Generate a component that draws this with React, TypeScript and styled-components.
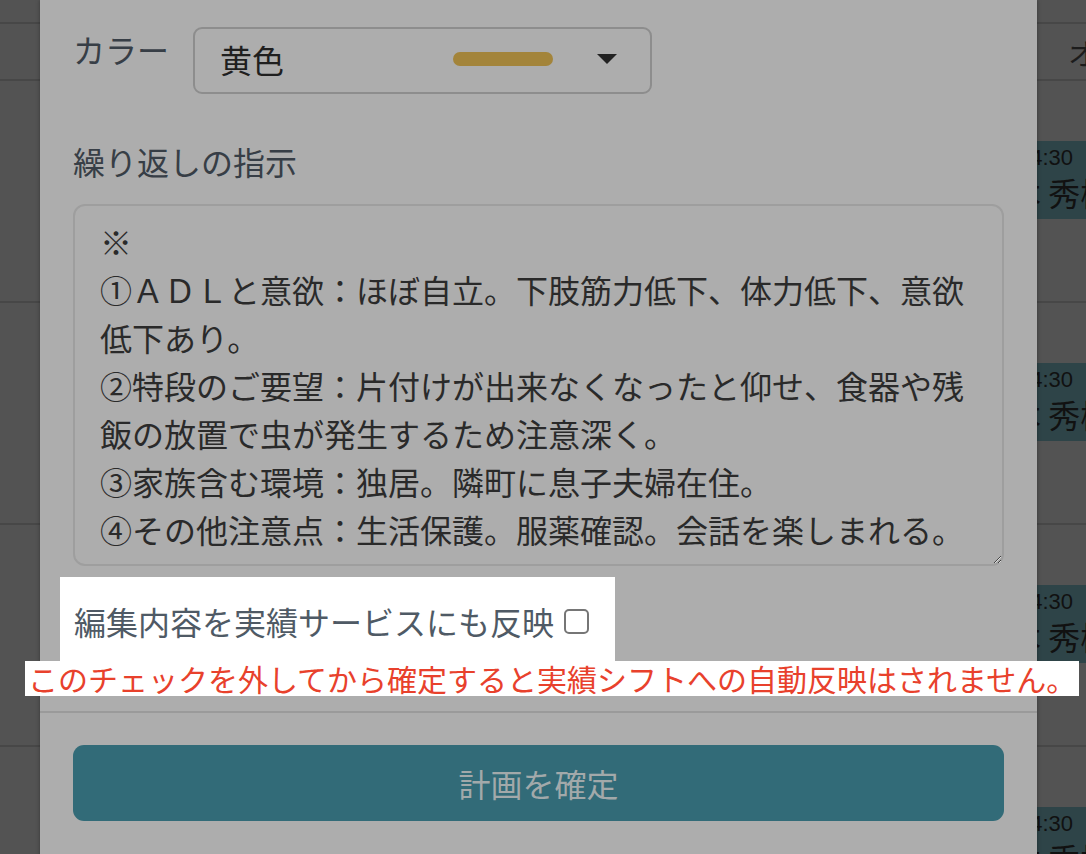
import styled, { createGlobalStyle } from 'styled-components';

const GlobalStyle = createGlobalStyle`
  html, body {
    margin: 0;
    padding: 0;
  }
  body {
    background: #535353;
    font-family: 'Noto Sans CJK JP', 'Noto Sans', sans-serif;
    overflow: hidden;
  }
`;

const Screen = styled.div`
  position: relative;
  width: 1086px;
  height: 854px;
  overflow: hidden;
  background: #535353;
`;

/* schedule table behind the modal */
const Schedule = styled.div`
  display: flex;
  flex-direction: column;
`;

const TopBar = styled.div`
  height: 22px;
  border-bottom: 2px solid #474747;
`;

const HeaderRow = styled.div`
  display: grid;
  grid-template-columns: 1068px 1fr;
  align-items: center;
  height: 55px;
  border-bottom: 2px solid #474747;
`;

const HeaderCell = styled.div`
  font-size: 30px;
  color: #1c1c1c;
  white-space: nowrap;
`;

const BodyRow = styled.div`
  display: grid;
  grid-template-columns: 977px 1fr;
  height: 220px;
  border-bottom: 2px solid #474747;
`;

const ShiftBlock = styled.div`
  margin-top: 60px;
  height: 78px;
  box-sizing: border-box;
  padding-top: 3px;
  background: #2e4448;
  color: #111;
  white-space: nowrap;
  overflow: hidden;
`;

const ShiftTime = styled.div`
  padding-left: 41px;
  font-family: 'Liberation Sans', Arial, sans-serif;
  font-size: 22px;
  line-height: 28px;
`;

const ShiftName = styled.div`
  font-size: 32px;
  line-height: 40px;
`;

/* modal */
const Modal = styled.div`
  position: absolute;
  top: 0;
  left: 40px;
  width: 997px;
  height: 900px;
  background: #adadad;
  box-shadow: 0 0 4px rgba(0, 0, 0, 0.35);
`;

const ModalBody = styled.div`
  display: flex;
  flex-direction: column;
  padding: 27px 33px 15px;
`;

const FieldRow = styled.div`
  display: flex;
  align-items: flex-start;
`;

const FieldLabel = styled.div<{ $width?: number; $top?: number }>`
  width: ${(p) => (p.$width ? `${p.$width}px` : 'auto')};
  margin-top: ${(p) => p.$top ?? 0}px;
  font-size: 32px;
  line-height: 48px;
  color: #373e46;
  white-space: nowrap;
`;

const Select = styled.div`
  display: flex;
  align-items: center;
  width: 459px;
  height: 67px;
  box-sizing: border-box;
  padding: 0 33px 4px 25px;
  border: 2px solid #8d8d8d;
  border-radius: 9px;
`;

const SelectValue = styled.span`
  flex: 1;
  font-size: 32px;
  color: #1f1f1f;
`;

const Swatch = styled.span<{ $color: string }>`
  width: 100px;
  height: 14px;
  margin-right: 44px;
  border-radius: 7px;
  background: ${(p) => p.$color};
`;

const TextArea = styled.textarea`
  display: block;
  width: 100%;
  height: 362px;
  margin-top: 19px;
  box-sizing: border-box;
  padding: 11px 25px;
  border: 2px solid #9e9e9e;
  border-radius: 12px;
  background: transparent;
  color: #2a2a2a;
  font-family: inherit;
  font-size: 32px;
  line-height: 48px;
  resize: vertical;
  overflow: hidden;
  outline: none;
`;

const CheckSpot = styled.label`
  align-self: flex-start;
  display: inline-flex;
  align-items: center;
  gap: 10px;
  margin: 11px 0 0 -13px;
  padding: 20px 26px 16px 14px;
  background: #fff;
  font-size: 32px;
  line-height: 48px;
  color: #4f5a65;
`;

const CheckBox = styled.input`
  appearance: none;
  width: 25px;
  height: 25px;
  margin: 0;
  box-sizing: border-box;
  border: 2px solid #767676;
  border-radius: 5px;
  background: #fff;
`;

const Warning = styled.div`
  align-self: flex-start;
  margin-left: -48px;
  padding: 0 3px;
  background: #fff;
  color: #e8412c;
  font-size: 30px;
  line-height: 35px;
  white-space: nowrap;
`;

const ModalFooter = styled.div`
  padding: 32px 33px;
  border-top: 2px solid #9a9a9a;
`;

const SubmitButton = styled.button`
  width: 100%;
  height: 76px;
  border: none;
  border-radius: 11px;
  background: #326b78;
  color: #a2a9aa;
  font-family: inherit;
  font-size: 32px;
`;

const instructions = [
  '※',
  '①ＡＤＬと意欲：ほぼ自立。下肢筋力低下、体力低下、意欲低下あり。',
  '②特段のご要望：片付けが出来なくなったと仰せ、食器や残飯の放置で虫が発生するため注意深く。',
  '③家族含む環境：独居。隣町に息子夫婦在住。',
  '④その他注意点：生活保護。服薬確認。会話を楽しまれる。',
].join('\n');

const rows = [0, 1, 2, 3];

export default function App() {
  return (
    <Screen>
      <GlobalStyle />
      <Schedule>
        <TopBar />
        <HeaderRow>
          <div />
          <HeaderCell>オペ</HeaderCell>
        </HeaderRow>
        {rows.map((r) => (
          <BodyRow key={r}>
            <div />
            <ShiftBlock>
              <ShiftTime>14:30</ShiftTime>
              <ShiftName>杉本 秀樹</ShiftName>
            </ShiftBlock>
          </BodyRow>
        ))}
      </Schedule>

      <Modal>
        <ModalBody>
          <FieldRow>
            <FieldLabel $width={120} $top={-2}>
              カラー
            </FieldLabel>
            <Select>
              <SelectValue>黄色</SelectValue>
              <Swatch $color="#a3843a" />
              <svg width="20" height="10" viewBox="0 0 20 10">
                <polygon points="0,0 20,0 10,10" fill="#222" />
              </svg>
            </Select>
          </FieldRow>

          <FieldLabel $top={43}>繰り返しの指示</FieldLabel>
          <TextArea defaultValue={instructions} spellCheck={false} />

          <CheckSpot>
            編集内容を実績サービスにも反映
            <CheckBox type="checkbox" />
          </CheckSpot>
          <Warning>このチェックを外してから確定すると実績シフトへの自動反映はされません。</Warning>
        </ModalBody>
        <ModalFooter>
          <SubmitButton type="button">計画を確定</SubmitButton>
        </ModalFooter>
      </Modal>
    </Screen>
  );
}
